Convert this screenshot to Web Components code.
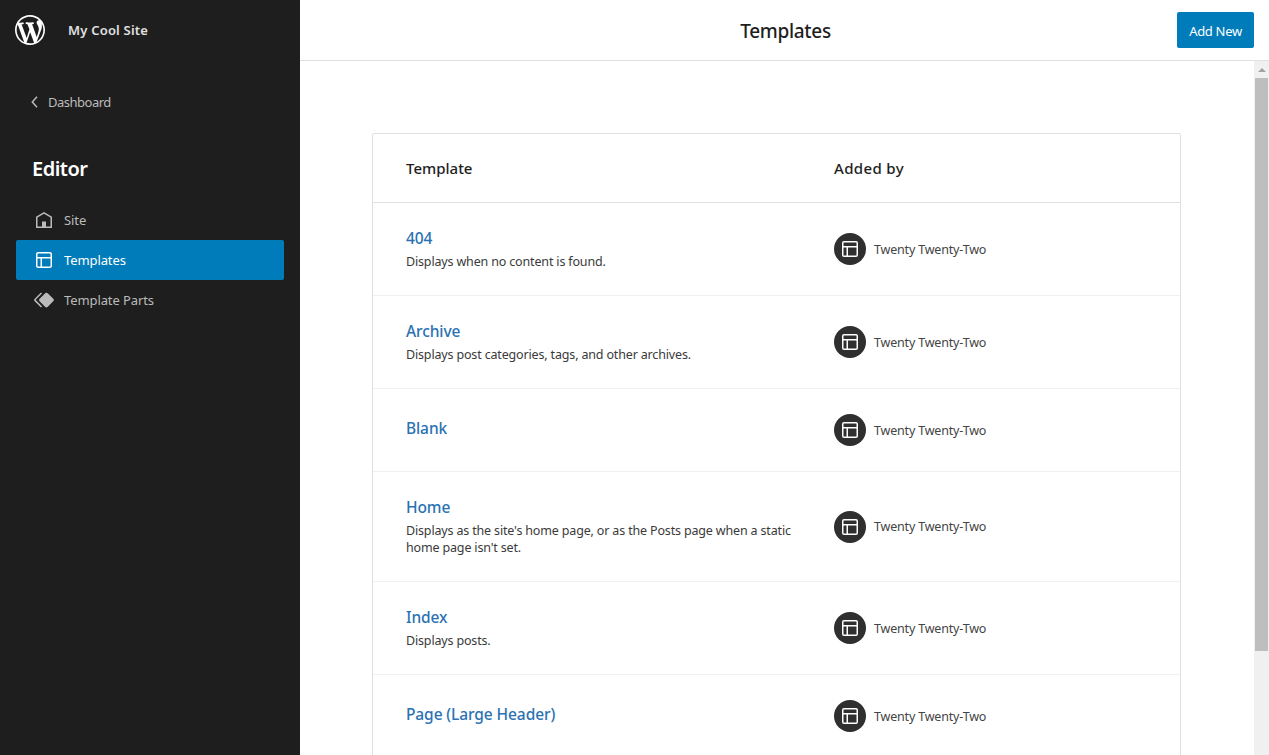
<!DOCTYPE html>
<html lang="en">
<head>
<meta charset="utf-8">
<title>Templates</title>
<style>
  html, body { margin: 0; height: 100%; overflow: hidden; }
  body { font-family: "Noto Sans", "Open Sans", sans-serif; font-size: 13px; color: #1e1e1e; background: #fff; }
</style>
</head>
<body>
<template-app>
  <site-sidebar slot="side">
    <nav-item icon="home">Site</nav-item>
    <nav-item icon="layout" active>Templates</nav-item>
    <nav-item icon="symbol">Template Parts</nav-item>
  </site-sidebar>
  <top-bar slot="top">Templates</top-bar>
  <template-table slot="main">
    <template-row name="404">Displays when no content is found.</template-row>
    <template-row name="Archive">Displays post categories, tags, and other archives.</template-row>
    <template-row name="Blank"></template-row>
    <template-row name="Home">Displays as the site's home page, or as the Posts page when a static home page isn't set.</template-row>
    <template-row name="Index">Displays posts.</template-row>
    <template-row name="Page (Large Header)"></template-row>
  </template-table>
</template-app>

<script>
const ICONS = {
  layout: '<path d="M18 5.5H6a.5.5 0 00-.5.5v3h13V6a.5.5 0 00-.5-.5zm.5 5H10v8h8a.5.5 0 00.5-.5v-7.5zm-10 0h-3V18a.5.5 0 00.5.5h2.5v-8zM6 4h12a2 2 0 012 2v12a2 2 0 01-2 2H6a2 2 0 01-2-2V6a2 2 0 012-2z"/>',
  home: '<path d="M12 4L4 8.8V20h16V8.8L12 4zm6.5 14.5H14v-5h-4v5H5.5V9.6L12 5.8l6.5 3.8v8.9z"/>',
  symbol: '<path d="M21.3 10.8l-5.6-5.6c-.7-.7-1.8-.7-2.5 0l-5.6 5.6c-.7.7-.7 1.8 0 2.5l5.6 5.6c.3.3.8.5 1.2.5s.9-.2 1.2-.5l5.6-5.6c.8-.7.8-1.9.1-2.5zm-17.6 1L10 5.5l-1-1-6.3 6.3c-.7.7-.7 1.8 0 2.5L9 19.5l1.1-1.1-6.3-6.3c-.2 0-.2-.2-.1-.3z"/>'
};

class TemplateApp extends HTMLElement {
  constructor() {
    super();
    this.attachShadow({ mode: "open" });
    this.shadowRoot.innerHTML = `
      <style>
        :host { display: flex; height: 100vh; overflow: hidden; }
        .side { flex: 0 0 300px; }
        .right { flex: 1; min-width: 0; display: flex; flex-direction: column; }
        .body { flex: 1; min-height: 0; display: flex; }
        .scroll { flex: 1; min-width: 0; overflow: hidden; padding-top: 72px; }
      </style>
      <div class="side"><slot name="side"></slot></div>
      <div class="right">
        <slot name="top"></slot>
        <div class="body">
          <div class="scroll"><slot name="main"></slot></div>
          <fake-scrollbar></fake-scrollbar>
        </div>
      </div>
    `;
  }
}

class SiteSidebar extends HTMLElement {
  constructor() {
    super();
    this.attachShadow({ mode: "open" });
    this.shadowRoot.innerHTML = `
      <style>
        :host { display: block; height: 100vh; background: #1e1e1e; color: #e0e0e0; box-sizing: border-box; }
        .brand { height: 60px; display: flex; align-items: center; padding-left: 15px; gap: 23px; }
        .brand svg { width: 30px; height: 30px; fill: #fff; display: block; }
        .site { font-size: 13px; font-weight: 600; color: #e0e0e0; letter-spacing: .2px; }
        .back { display: flex; align-items: center; height: 24px; margin-top: 30px; padding-left: 24px; color: #bbb; font-size: 13px; letter-spacing: -.5px; }
        .back svg { width: 24px; height: 24px; display: block; }
        h1 { margin: 41px 0 0 32px; font-size: 20px; line-height: 28px; font-weight: 600; color: #fff; letter-spacing: -.5px; }
        .menu { margin: 17px 16px 0; }
      </style>
      <div class="brand">
        <svg viewBox="0 0 20 20"><path d="M20 10c0-5.51-4.49-10-10-10C4.48 0 0 4.49 0 10c0 5.52 4.48 10 10 10 5.51 0 10-4.48 10-10zM7.78 15.37L4.37 6.22c.55-.02 1.17-.08 1.17-.08.5-.06.44-1.13-.06-1.11 0 0-1.45.11-2.37.11-.18 0-.37 0-.58-.01C4.12 2.69 6.87 1.11 10 1.11c2.33 0 4.45.87 6.05 2.34-.68-.11-1.65.39-1.65 1.58 0 .74.45 1.36.9 2.1.35.61.55 1.36.55 2.46 0 1.49-1.4 5-1.4 5l-3.03-8.37c.54-.02.82-.17.82-.17.5-.05.44-1.25-.06-1.22 0 0-1.44.12-2.38.12-.87 0-2.33-.12-2.33-.12-.5-.03-.56 1.2-.06 1.22l.92.08 1.26 3.41zM17.41 10c.24-.64.74-1.87.43-4.25.7 1.29 1.05 2.71 1.05 4.25 0 3.29-1.73 6.24-4.4 7.78.97-2.59 1.94-5.2 2.92-7.78zM6.1 18.09C3.12 16.65 1.11 13.53 1.11 10c0-1.3.23-2.48.72-3.59C3.25 10.3 4.67 14.2 6.1 18.09zm4.03-6.63l2.58 6.98c-.86.29-1.76.45-2.71.45-.79 0-1.57-.11-2.29-.33.81-2.38 1.62-4.74 2.42-7.1z"/></svg>
        <span class="site">My Cool Site</span>
      </div>
      <div class="back">
        <svg viewBox="0 0 24 24"><path d="M13 6.8L8.3 12l4.7 5.2" fill="none" stroke="#bbb" stroke-width="1.5"/></svg>
        <span>Dashboard</span>
      </div>
      <h1>Editor</h1>
      <div class="menu"><slot></slot></div>
    `;
  }
}

class NavItem extends HTMLElement {
  constructor() {
    super();
    this.attachShadow({ mode: "open" });
  }
  connectedCallback() {
    const icon = ICONS[this.getAttribute("icon")] || "";
    this.shadowRoot.innerHTML = `
      <style>
        :host { display: flex; align-items: center; height: 40px; gap: 8px; padding-left: 16px; border-radius: 2px; color: #bbb; fill: #bbb; letter-spacing: -.1px; }
        :host([active]) { background: #007cba; color: #fff; fill: #fff; }
        svg { width: 24px; height: 24px; display: block; flex: none; }
      </style>
      <svg viewBox="0 0 24 24">${icon}</svg>
      <span><slot></slot></span>
    `;
  }
}

class TopBar extends HTMLElement {
  constructor() {
    super();
    this.attachShadow({ mode: "open" });
    this.shadowRoot.innerHTML = `
      <style>
        :host { display: flex; align-items: center; justify-content: space-between; flex: none; height: 60px; padding: 0 15px 0 16px; background: #fff; border-bottom: 1px solid #e0e0e0; }
        .title { flex: 1; text-align: center; font-size: 19px; font-weight: 500; color: #1e1e1e; padding: 2px 0 0 78px; letter-spacing: -.3px; }
        button { font: inherit; height: 36px; width: 77px; padding: 2px 0 0; border: 0; border-radius: 2px; background: #007cba; color: #fff; letter-spacing: -.3px; }
      </style>
      <div class="title"><slot></slot></div>
      <button>Add New</button>
    `;
  }
}

class FakeScrollbar extends HTMLElement {
  constructor() {
    super();
    this.attachShadow({ mode: "open" });
    this.shadowRoot.innerHTML = `
      <style>
        :host { display: block; flex: 0 0 15px; background: #f0f0f0; box-sizing: border-box; padding: 0 1px 0 1px; }
        .up { height: 17px; display: flex; align-items: center; justify-content: center; }
        .up i { display: block; width: 0; height: 0; border: 4px solid transparent; border-top: 0; border-bottom: 4px solid #a3a3a3; }
        .thumb { height: 573px; background: #bebebe; }
      </style>
      <div class="up"><i></i></div>
      <div class="thumb"></div>
    `;
  }
}

class TemplateTable extends HTMLElement {
  constructor() {
    super();
    this.attachShadow({ mode: "open" });
    this.shadowRoot.innerHTML = `
      <style>
        :host { display: block; width: 809px; margin: 0 73px 0 72px; box-sizing: border-box; border: 1px solid #e0e0e0; border-radius: 2px; background: #fff; }
        .head { display: grid; grid-template-columns: 428px 1fr; align-items: center; height: 68px; padding: 0 33px; border-bottom: 1px solid #e0e0e0; font-size: 15px; font-weight: 500; color: #1e1e1e; }
        .head span + span { letter-spacing: .35px; }
      </style>
      <div class="head"><span>Template</span><span>Added by</span></div>
      <slot></slot>
    `;
  }
}

class TemplateRow extends HTMLElement {
  constructor() {
    super();
    this.attachShadow({ mode: "open" });
  }
  connectedCallback() {
    const name = this.getAttribute("name");
    this.shadowRoot.innerHTML = `
      <style>
        :host { display: grid; grid-template-columns: 428px 1fr; align-items: center; padding: 25px 33px; border-bottom: 1px solid #f0f0f0; }
        .name { font-size: 15.5px; line-height: 21px; margin-bottom: 4px; font-weight: 500; color: #2b72b3; letter-spacing: -.1px; }
        .desc { font-size: 12.5px; line-height: 17px; color: #3a3a3a; max-width: 400px; letter-spacing: -.16px; }
        .by { display: flex; align-items: center; gap: 8px; font-size: 12.5px; color: #444; letter-spacing: -.18px; }
        .avatar { width: 32px; height: 32px; border-radius: 50%; background: #2f2f2f; display: flex; align-items: center; justify-content: center; flex: none; }
        .avatar svg { width: 24px; height: 24px; fill: #fff; display: block; }
      </style>
      <div>
        <div class="name">${name}</div>
        <div class="desc"><slot></slot></div>
      </div>
      <div class="by">
        <span class="avatar"><svg viewBox="0 0 24 24">${ICONS.layout}</svg></span>
        <span>Twenty Twenty-Two</span>
      </div>
    `;
  }
}

customElements.define("template-app", TemplateApp);
customElements.define("site-sidebar", SiteSidebar);
customElements.define("nav-item", NavItem);
customElements.define("top-bar", TopBar);
customElements.define("fake-scrollbar", FakeScrollbar);
customElements.define("template-table", TemplateTable);
customElements.define("template-row", TemplateRow);
</script>
</body>
</html>
